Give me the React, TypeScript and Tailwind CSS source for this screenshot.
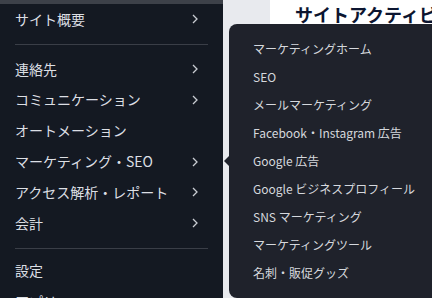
import React from 'react';

const sansJP = { fontFamily: '"Noto Sans CJK JP", "Noto Sans", sans-serif' };

const Chevron = () => (
  <svg width="6" height="10" viewBox="0 0 6 10" className="text-[#c9ccd2]">
    <polyline points="1,1 5,5 1,9" fill="none" stroke="currentColor" strokeWidth="1.3" />
  </svg>
);

const SideItem = ({ label, arrow = false }: { label: string; arrow?: boolean }) => (
  <div className="flex shrink-0 items-center justify-between h-[30.8px] pl-[15px] pr-[25px] text-[14px] text-[#dcdfe4] whitespace-nowrap">
    <span>{label}</span>
    {arrow && <Chevron />}
  </div>
);

const Divider = ({ mb }: { mb: string }) => (
  <div className={`shrink-0 mx-[15px] mt-[9px] h-px bg-[#3a3e47] ${mb}`} />
);

export default function App() {
  const marketing = [
    'マーケティングホーム',
    'SEO',
    'メールマーケティング',
    'Facebook・Instagram 広告',
    'Google 広告',
    'Google ビジネスプロフィール',
    'SNS マーケティング',
    'マーケティングツール',
    '名刺・販促グッズ',
  ];

  return (
    <div className="relative w-[432px] h-[298px] overflow-hidden flex" style={sansJP}>
      {/* Sidebar */}
      <aside className="w-[223px] h-full bg-[#141922] flex flex-col shrink-0 overflow-hidden">
        <div className="h-[4px] shrink-0 bg-[#3d4149]" />
        <SideItem label="サイト概要" arrow />
        <Divider mb="mb-[9px]" />
        <SideItem label="連絡先" arrow />
        <SideItem label="コミュニケーション" arrow />
        <SideItem label="オートメーション" />
        <SideItem label="マーケティング・SEO" arrow />
        <SideItem label="アクセス解析・レポート" arrow />
        <SideItem label="会計" arrow />
        <Divider mb="mb-[7px]" />
        <SideItem label="設定" />
        <SideItem label="アプリ" />
      </aside>

      {/* Main */}
      <main className="flex-1 h-full bg-[#e8eaee] pl-[47px] overflow-hidden">
        <div className="h-full bg-white pl-[25px] pt-[2px]">
          <h1 className="text-[18px] font-bold text-[#0c1530] whitespace-nowrap leading-[24px]">
            サイトアクティビティ
          </h1>
        </div>
      </main>

      {/* Submenu popover */}
      <div className="absolute left-[229px] top-[24px] w-[240px] h-[274px] rounded-lg bg-[#1f222b] pt-[11px]">
        <svg className="absolute -left-[5px] top-[131px]" width="6" height="12" viewBox="0 0 6 12">
          <polygon points="6,0 0,6 6,12" fill="#1f222b" />
        </svg>
        {marketing.map((m) => (
          <div key={m} className="h-[28px] flex items-center pl-[24px] text-[12px] text-[#d5d8dd] whitespace-nowrap">
            {m}
          </div>
        ))}
      </div>
    </div>
  );
}
